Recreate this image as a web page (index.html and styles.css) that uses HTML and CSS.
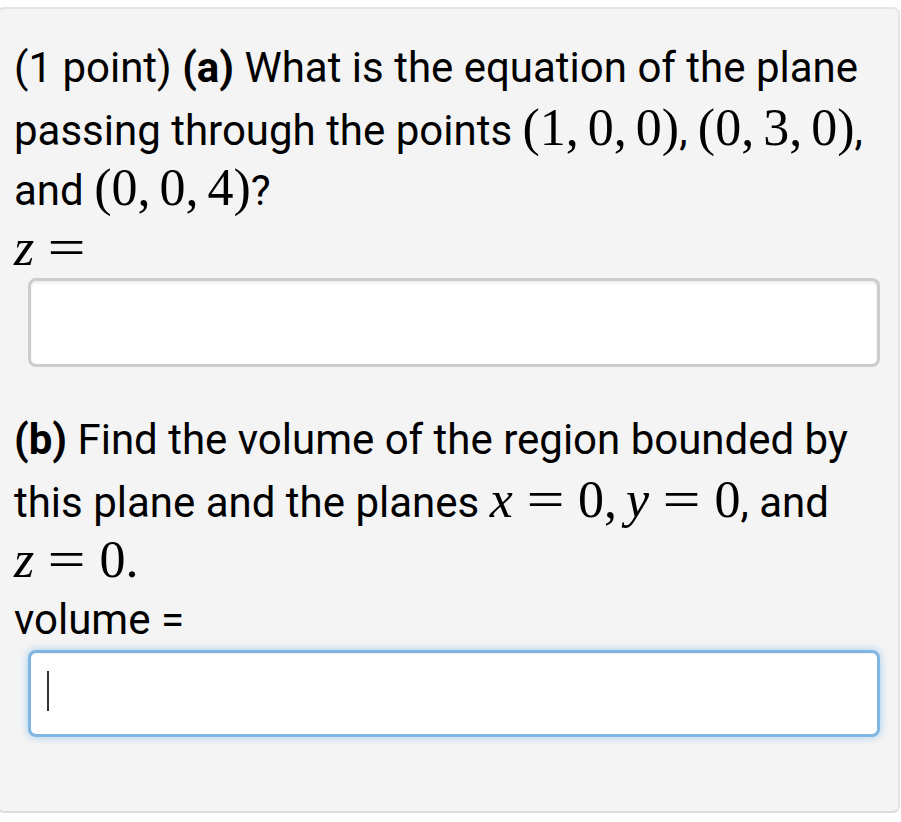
FILE: index.html
```html
<!DOCTYPE html>
<html>
<head>
<meta charset="utf-8">
<link rel="stylesheet" href="styles.css">
</head>
<body>
<div class="panel">
  <div class="para">
    <div class="line">(1 point) <b>(a)</b> What is the equation of the plane</div>
    <div class="line">passing through the points <span class="m">(1,<span class="s"></span>0,<span class="s"></span>0)</span>, <span class="m">(0,<span class="s"></span>3,<span class="s"></span>0)</span>,</div>
    <div class="line">and <span class="m">(0,<span class="s"></span>0,<span class="s"></span>4)</span>?</div>
    <div class="line"><span class="m"><i>z</i><span class="eq">=</span></span></div>
  </div>
  <div class="answer"></div>
  <div class="para partb">
    <div class="line"><b>(b)</b> Find the volume of the region bounded by</div>
    <div class="line">this plane and the planes <span class="m"><i>x</i><span class="eq">=</span>0,<span class="s"></span><i>y</i><span class="eq">=</span>0</span>, and</div>
    <div class="line"><span class="m"><i>z</i><span class="eq">=</span>0.</span></div>
    <div class="line">volume =</div>
  </div>
  <div class="answer focused"><span class="caret"></span></div>
</div>
</body>
</html>
```
FILE: styles.css
```css
html, body {
  margin: 0;
  padding: 0;
  background: #ffffff;
}
body {
  width: 901px;
  height: 822px;
  overflow: hidden;
  font-family: Roboto, "Noto Sans", sans-serif;
  color: #000;
}
.panel {
  margin-top: 7px;
  margin-left: -3px;
  width: 903px;
  height: 806px;
  box-sizing: border-box;
  background: #f4f4f4;
  border: 2px solid #e4e4e4;
  border-bottom-color: #dcdcdc;
  border-radius: 7px;
  padding: 29px 0 0 15px;
}
.para {
  font-size: 42px;
  line-height: 60px;
}
.line {
  white-space: nowrap;
  height: 60px;
}
.line b {
  font-weight: 700;
}
.m {
  font-family: "Liberation Serif", "DejaVu Serif", serif;
  font-size: 52px;
}
.m i {
  font-style: italic;
}
.s {
  display: inline-block;
  width: 9px;
}
.eq {
  display: inline-block;
  margin: 0 18px;
  transform: scaleX(1.3);
}
.answer {
  margin-left: 14px;
  width: 852px;
  height: 89px;
  box-sizing: border-box;
  background: #fff;
  border: 3px solid #cccccc;
  border-radius: 8px;
  box-shadow: inset 0 2px 3px rgba(0,0,0,0.08);
  position: relative;
}
.partb {
  margin-top: 43px;
}
.answer.focused {
  height: 87px;
  border-color: #82b6e2;
  box-shadow: inset 0 1px 1px rgba(0,0,0,0.075), 0 0 8px rgba(102,175,233,0.6);
}
.caret {
  position: absolute;
  left: 16px;
  top: 18px;
  width: 2px;
  height: 40px;
  background: #333;
}
```
